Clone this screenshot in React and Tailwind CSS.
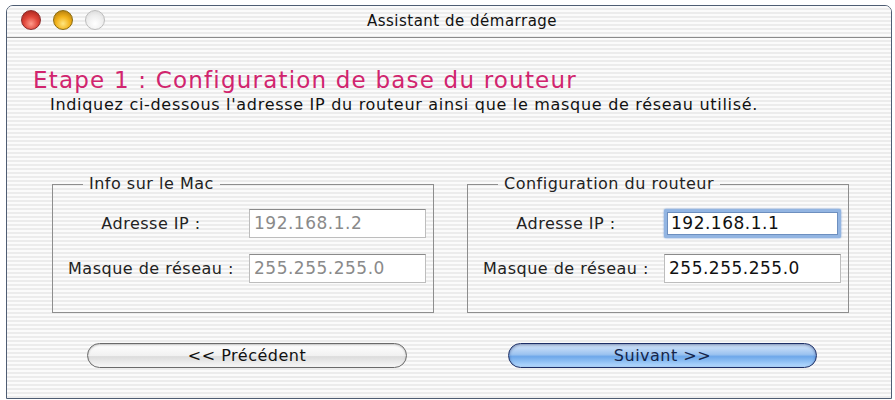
const stripes =
  'bg-[repeating-linear-gradient(180deg,#fbfbfb_0px,#fbfbfb_2px,#ececec_2px,#ececec_4px)]';

const Light = ({ color }) => (
  <span className={`block w-[20px] h-[20px] rounded-full border ${color}`} />
);

const Field = ({ label, value, dim, focus }) => (
  <>
    <span className="text-center text-[16px] tracking-[0.5px] text-[#222]">{label}</span>
    {focus ? (
      <div className="h-[29px] rounded-[2px] p-[3px] bg-[#93b5e2] shadow-[0_0_2px_#5f8fd0]">
        <div className="h-full bg-white border border-[#6d8fbf] flex items-center px-[3px] text-[17px] tracking-[0.5px] text-[#111]">
          {value}
        </div>
      </div>
    ) : (
      <div
        className={`h-[29px] bg-white border border-[#bdbdbd] border-t-[#8a8a8a] flex items-center px-[4px] text-[17px] tracking-[0.5px] ${
          dim ? 'text-[#8a8a8a]' : 'text-[#111]'
        }`}
      >
        {value}
      </div>
    )}
  </>
);

const Group = ({ title, children }) => (
  <fieldset className="w-[382px] h-[139px] border border-[#8e8e8e] pl-[10px] pt-[15px]">
    <legend className="ml-[20px] px-[6px] text-[16px] tracking-[0.5px] text-[#222] leading-[20px]">
      {title}
    </legend>
    <div className="grid grid-cols-[176px_177px] gap-x-[10px] gap-y-[16px] items-center">
      {children}
    </div>
  </fieldset>
);

export default function App() {
  return (
    <div
      className="w-[895px] h-[400px] bg-white pt-[5px] pl-[6px]"
      style={{ fontFamily: '"DejaVu Sans", "Liberation Sans", sans-serif' }}
    >
      <div className="w-[886px] h-[394px] border border-[#4e5d73] rounded-t-[7px] overflow-hidden flex flex-col">
        {/* title bar */}
        <div
          className={`relative h-[32px] shrink-0 flex items-center justify-center border-b border-[#8a8a8a] ${stripes}`}
        >
          <div className="absolute left-[14px] top-[4px] flex gap-[12px]">
            <Light color="border-[#8a2a2a] bg-[radial-gradient(circle_at_50%_70%,#ff9c8c_0%,#e0463a_45%,#9a1d16_100%)]" />
            <Light color="border-[#8a6a10] bg-[radial-gradient(circle_at_50%_70%,#ffe680_0%,#f2b21a_45%,#a06c08_100%)]" />
            <Light color="border-[#bcbcbc] bg-[radial-gradient(circle_at_50%_70%,#ffffff_0%,#ededed_55%,#d2d2d2_100%)]" />
          </div>
          <span className="text-[15px] tracking-[0.5px] text-[#111] pl-[26px]">
            Assistant de démarrage
          </span>
        </div>

        {/* content */}
        <div className={`flex-1 ${stripes} pt-[28px]`}>
          <h1 className="pl-[26px] text-[23px] leading-[28px] tracking-[1.2px] text-[#d1246e]">
            Etape 1 : Configuration de base du routeur
          </h1>
          <p className="pl-[43px] mt-[1px] text-[16px] leading-[20px] tracking-[0.7px] text-[#111]">
            Indiquez ci-dessous l'adresse IP du routeur ainsi que le masque de réseau utilisé.
          </p>

          <div className="flex gap-[33px] pl-[45px] mt-[59px]">
            <Group title="Info sur le Mac">
              <Field label="Adresse IP :" value="192.168.1.2" dim />
              <Field label="Masque de réseau :" value="255.255.255.0" dim />
            </Group>
            <Group title="Configuration du routeur">
              <Field label="Adresse IP :" value="192.168.1.1" focus />
              <Field label="Masque de réseau :" value="255.255.255.0" />
            </Group>
          </div>

          <div className="flex mt-[30px] pl-[80px]">
            <button className="w-[320px] h-[25px] rounded-full border border-[#6a6a6a] bg-[linear-gradient(180deg,#ffffff_0%,#f1f1f1_50%,#dcdcdc_55%,#f7f7f7_100%)] shadow-[inset_0_1px_2px_rgba(0,0,0,0.25)] text-[16px] tracking-[0.5px] text-[#111]">
              &lt;&lt; Précédent
            </button>
            <button className="ml-[101px] w-[309px] h-[25px] rounded-full border border-[#1d2f66] bg-[linear-gradient(180deg,#d8e8fb_0%,#9cc3f0_45%,#6ea8ea_55%,#b7dcff_100%)] shadow-[inset_0_1px_3px_rgba(0,20,80,0.45)] text-[16px] tracking-[0.5px] text-[#15254a]">
              Suivant &gt;&gt;
            </button>
          </div>
        </div>
      </div>
    </div>
  );
}
